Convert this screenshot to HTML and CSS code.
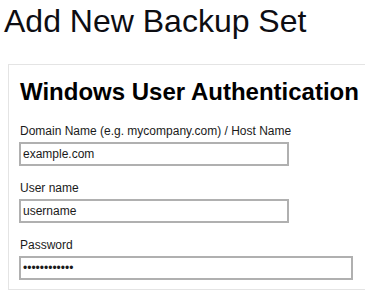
FILE: index.html
```html
<!DOCTYPE html>
<html>
<head>
<meta charset="utf-8">
<link rel="stylesheet" href="styles.css">
</head>
<body>
<div class="page">
  <h1 class="title">Add New Backup Set</h1>
  <section class="card">
    <h2 class="card-title">Windows User Authentication</h2>
    <div class="field">
      <label class="field-label" for="domain">Domain Name (e.g. mycompany.com) / Host Name</label>
      <input class="field-input" id="domain" type="text" value="example.com">
    </div>
    <div class="field">
      <label class="field-label" for="user">User name</label>
      <input class="field-input" id="user" type="text" value="username">
    </div>
    <div class="field field-last">
      <label class="field-label" for="pass">Password</label>
      <input class="field-input field-input-wide" id="pass" type="password" value="passwordpass">
    </div>
  </section>
</div>
</body>
</html>
```

FILE: styles.css
```css
html, body {
  margin: 0;
  padding: 0;
  background: #ffffff;
  overflow: hidden;
}

body {
  font-family: "Liberation Sans", Arial, sans-serif;
  color: #111;
}

.page {
  padding: 3px 0 0 4px;
}

.title {
  margin: 0 0 24px 0;
  font-size: 32px;
  font-weight: normal;
  line-height: 37px;
  color: #0d0d12;
  white-space: nowrap;
}

.card {
  margin-left: 4px;
  border: 1px solid #e4e4e4;
  border-right: 0;
  padding: 13px 0 9px 10px;
}

.card-title {
  margin: 0 0 18px 1px;
  font-size: 24px;
  font-weight: bold;
  line-height: 28px;
  color: #000;
  white-space: nowrap;
}

.field {
  margin-bottom: 15px;
}

.field-last {
  margin-bottom: 0;
}

.field-label {
  display: block;
  font-size: 12px;
  line-height: 14px;
  margin: 0 0 4px 1px;
  color: #1a1a1a;
}

.field-input {
  display: block;
  box-sizing: border-box;
  width: 270px;
  height: 24px;
  margin: 0;
  padding: 0 2px;
  border: 2px solid #b0b0b0;
  border-radius: 0;
  background: #fff;
  font-family: "Liberation Sans", Arial, sans-serif;
  font-size: 12px;
  color: #1a1a1a;
  outline: none;
}

.field-input-wide {
  width: 334px;
}
```
